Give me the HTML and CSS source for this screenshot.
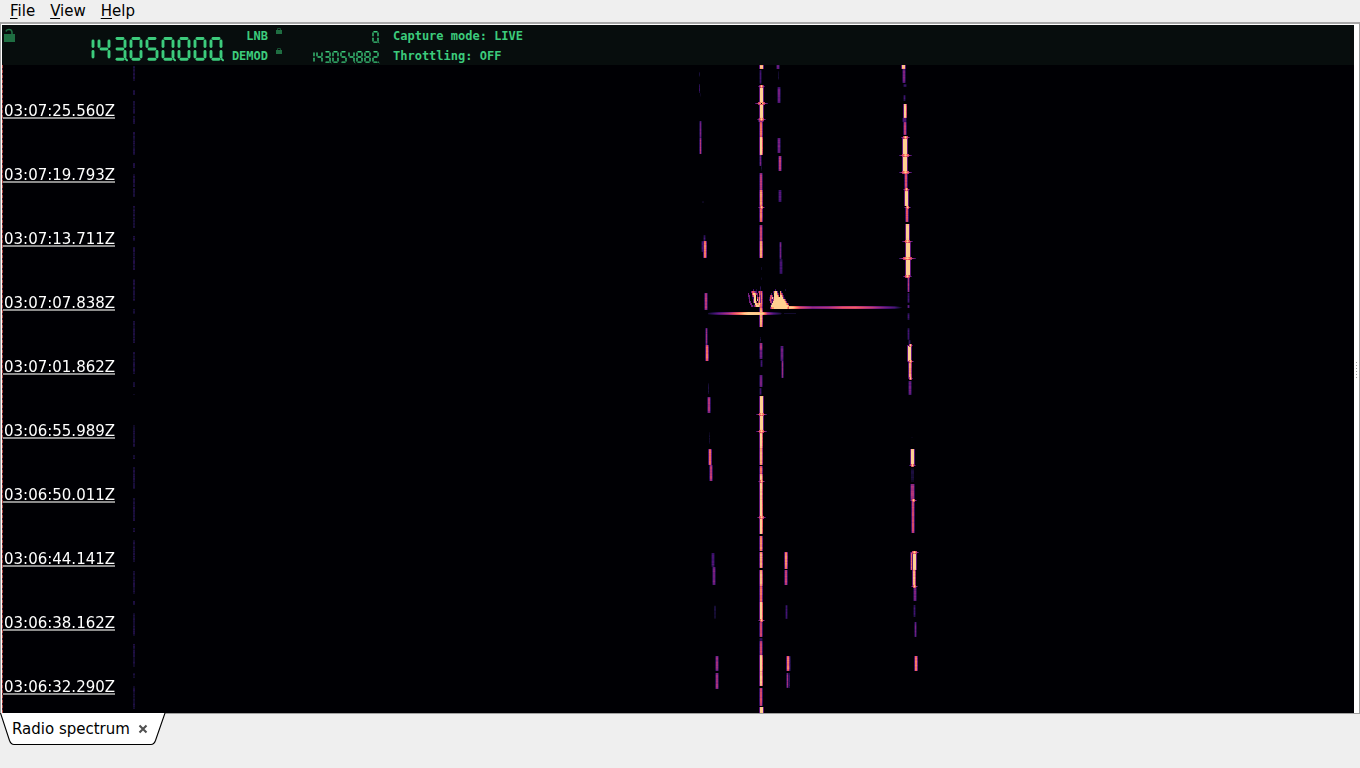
FILE: index.html
```html
<!DOCTYPE html>
<html lang="en">
<head>
  <meta charset="UTF-8">
  <title>Radio spectrum</title>
  <link rel="stylesheet" href="styles.css">
</head>
<body>

  <nav class="menubar">
    <span class="menu"><u>F</u>ile</span>
    <span class="menu"><u>V</u>iew</span>
    <span class="menu"><u>H</u>elp</span>
  </nav>

  <main class="panel">
    <div class="display">
      <header class="status">
        <svg class="lock-big" width="14" height="15" viewBox="0 0 14 15">
          <path d="M3 3.5Q3.5 1.5 6 1.5Q9 1.5 9 4.5V6" fill="none" stroke="#1f6e42" stroke-width="1.6"/>
          <rect x="1" y="6" width="11" height="8" fill="#1f6e42"/>
        </svg>
        <div class="lcd lcd-big" data-value="143.050.000." role="img" aria-label="143.050.000"></div>
        <div class="names">
          <span>LNB</span>
          <span>DEMOD</span>
        </div>
        <div class="locks">
          <svg width="8" height="8" viewBox="0 0 8 8"><path d="M2.5 3V1.5H5.5V3" fill="none" stroke="#174f31"/><rect x="1" y="3" width="6" height="4" fill="#1f6e42"/></svg>
          <svg width="8" height="8" viewBox="0 0 8 8"><path d="M2.5 3V1.5H5.5V3" fill="none" stroke="#174f31"/><rect x="1" y="3" width="6" height="4" fill="#1f6e42"/></svg>
        </div>
        <div class="readouts">
          <div class="lcd lcd-small" data-value="0." role="img" aria-label="0"></div>
          <div class="lcd lcd-small" data-value="143.054.882." role="img" aria-label="143.054.882"></div>
        </div>
        <div class="modes">
          <span>Capture mode: LIVE</span>
          <span>Throttling: OFF</span>
        </div>
      </header>

      <div class="waterfall">
        <canvas id="waterfall" width="1352" height="648"></canvas>
        <div class="times">
          <span>03:07:25.560Z</span>
          <span>03:07:19.793Z</span>
          <span>03:07:13.711Z</span>
          <span>03:07:07.838Z</span>
          <span>03:07:01.862Z</span>
          <span>03:06:55.989Z</span>
          <span>03:06:50.011Z</span>
          <span>03:06:44.141Z</span>
          <span>03:06:38.162Z</span>
          <span>03:06:32.290Z</span>
        </div>
      </div>
    </div>
    <div class="grip"><i></i><i></i><i></i><i></i><i></i><i></i></div>
  </main>

  <footer class="tabs">
    <div class="tab">
      <svg class="tab-shape" width="166" height="33" viewBox="0 0 166 33">
        <path d="M0.5 0L9.5 27.5Q11 31.5 14 31.5H151Q154 31.5 155.5 27.5L165 0" fill="#fff" stroke="#000" stroke-width="1.1"/>
      </svg>
      <span>Radio spectrum</span>
      <svg class="close" width="10" height="10" viewBox="0 0 10 10">
        <path d="M1.5 1.5L8.5 8.5M8.5 1.5L1.5 8.5" stroke="#505050" stroke-width="2.1"/>
      </svg>
    </div>
  </footer>

  <script src="spectrum.js"></script>
</body>
</html>
```
FILE: styles.css
```css
* {
  margin: 0;
  padding: 0;
  box-sizing: border-box;
}

body {
  width: 1360px;
  height: 768px;
  display: flex;
  flex-direction: column;
  overflow: hidden;
  background: #efefef;
  color: #000;
  font: 15px "DejaVu Sans", sans-serif;
}

.menubar {
  height: 22px;
  display: flex;
  gap: 15px;
  padding-left: 10px;
  line-height: 23px;
}

.menu u {
  text-underline-offset: 2px;
  text-decoration-thickness: 1px;
}

.panel {
  height: 692px;
  display: flex;
  background: #fff;
  border: 1px solid #a0a0a0;
  border-top: 2px solid #a8a8a8;
  padding: 1px 0 0 1px;
}

.display {
  width: 1352px;
  display: flex;
  flex-direction: column;
}

.status {
  height: 40px;
  display: flex;
  background: #070d0d;
  color: #3ccb7c;
  font: bold 12px "DejaVu Sans Mono", monospace;
}

.lock-big {
  margin: 3px 0 0 1px;
  width: 14px;
}

.lcd {
  display: flex;
}

.lcd svg {
  overflow: visible;
  fill: none;
  stroke: #3ccb7c;
  stroke-linecap: round;
}

.lcd-big {
  width: 144px;
  height: 24px;
  margin: 12px 0 0 64px;
}

.lcd-big svg {
  width: 16px;
  height: 24px;
  stroke-width: 2.9;
}

.names {
  width: 43px;
  padding-top: 1px;
  display: flex;
  flex-direction: column;
  text-align: right;
}

.names span,
.modes span {
  height: 20px;
  line-height: 20px;
}

.locks {
  width: 16px;
  padding: 2px 0 0 7px;
  display: flex;
  flex-direction: column;
  gap: 12px;
}

.readouts {
  width: 96px;
  padding-top: 6px;
  display: flex;
  flex-direction: column;
  align-items: flex-end;
  gap: 8px;
}

.lcd-small {
  height: 12px;
}

.lcd-small svg {
  width: 8px;
  height: 12px;
  stroke-width: 2.7;
}

.modes {
  margin-left: 13px;
  padding-top: 1px;
  display: flex;
  flex-direction: column;
}

.waterfall {
  position: relative;
  height: 648px;
  background: #000004;
}

.waterfall canvas {
  display: block;
}

.times {
  position: absolute;
  top: 35px;
  left: 1px;
  display: flex;
  flex-direction: column;
  gap: 45px;
  color: #fff;
}

.times span {
  width: 112px;
  height: 19px;
  padding-left: 1px;
  line-height: 22px;
  border-bottom: 2px solid #8c8c8c;
}

.grip {
  flex: 1;
  padding: 337px 0 0 2px;
  display: flex;
  flex-direction: column;
  gap: 2px;
}

.grip i {
  width: 1px;
  height: 1px;
  background: #a0a0a0;
}

.tabs {
  height: 54px;
}

.tab {
  position: relative;
  width: 166px;
  height: 32px;
  margin-top: -1px;
  padding-left: 12px;
  display: flex;
  align-items: center;
  gap: 8px;
}

.tab-shape {
  position: absolute;
  top: 0;
  left: 0;
}

.tab span,
.close {
  position: relative;
}
```
FILE: spectrum.js
```js
// seven segment displays, each cell is 16x24 units
const SEGMENTS = {
  a: [4, 1.5, 10, 1.5],
  b: [12, 4, 12, 9.5],
  c: [12, 14.5, 12, 20],
  d: [4, 22.3, 10, 22.3],
  e: [2, 14.5, 2, 20],
  f: [2, 4, 2, 9.5],
  g: [4, 12, 10, 12]
};
const DIGITS = ["abcdef", "bc", "abdeg", "abcdg", "bcfg", "acdfg", "acdefg", "abc", "abcdefg", "abcdfg"];

document.querySelectorAll(".lcd").forEach(lcd => {
  lcd.innerHTML = lcd.dataset.value.match(/\d\.?/g).map(cell => {
    let lines = [...DIGITS[cell[0]]].map(s => {
      const [x1, y1, x2, y2] = SEGMENTS[s];
      return `<line x1="${x1}" y1="${y1}" x2="${x2}" y2="${y2}"/>`;
    }).join("");
    if (cell[1]) lines += '<line x1="12.7" y1="22" x2="14" y2="23.2" stroke-width="2"/>';
    return `<svg viewBox="0 0 16 24">${lines}</svg>`;
  }).join("");
});

const ctx = document.getElementById("waterfall").getContext("2d");
ctx.translate(-2, -65);

// colour for a signal level between 0 and 7
const PALETTE = [[0, 0, 4], [24, 14, 58], [66, 16, 112], [118, 30, 128], [184, 55, 120], [238, 85, 95], [254, 150, 105], [255, 208, 145]];
function color(level) {
  const l = Math.max(0, Math.min(6.999, level));
  const i = Math.floor(l);
  const c = PALETTE[i].map((v, k) => Math.round(v + (PALETTE[i + 1][k] - v) * (l - i)));
  return `rgb(${c})`;
}

function dot(x, y, w, h, level) {
  ctx.fillStyle = color(level);
  ctx.fillRect(x, y, w, h);
}

let seed = 7;
function noise() {
  seed = (seed * 16807) % 2147483647;
  return seed / 2147483647 - 0.5;
}

// x, first row, last row, core width, level
const TRACES = [
  // carrier
  [760, 65, 69, 3, 7], [760, 70, 84, 1, 2], [760, 85, 118, 3, 7.4], [759, 118, 122, 4, 4], [760, 122, 137, 2, 5.4],
  [760, 137, 155, 2, 7.3], [760, 155, 166, 1, 3], [761, 166, 171, 1, 1], [760, 173, 190, 2, 4], [760, 190, 206, 2, 6],
  [760, 206, 222, 2, 5.4], [760, 225, 241, 2, 4.3], [760, 241, 258, 2, 6.2], [761, 267, 270, 1, 1], [761, 277, 280, 1, 1],
  [760, 286, 291, 1, 1.5], [760, 291, 308, 2, 5.4], [760, 308, 327, 2, 6.4], [760, 337, 343, 1, 1], [760, 343, 350, 2, 4],
  [760, 350, 359, 2, 3], [761, 360, 367, 1, 2], [760, 375, 387, 2, 3], [760, 388, 395, 1, 2], [760, 396, 430, 3, 7.4],
  [760, 432, 448, 2, 7.2], [760, 448, 465, 2, 6.4], [760, 466, 474, 2, 5.4], [760, 474, 500, 2, 6.9], [760, 500, 534, 2, 7.4],
  [760, 536, 551, 2, 5.9], [760, 552, 568, 2, 6.3], [760, 570, 586, 2, 6.5], [760, 586, 602, 2, 5.4], [760, 602, 620, 2, 7.4],
  [760, 622, 637, 2, 4.5], [760, 638, 641, 2, 2], [760, 641, 655, 2, 4.5], [760, 655, 671, 2, 7.2], [760, 671, 686, 2, 6.8],
  [760, 688, 706, 2, 4.5], [760, 707, 713, 3, 7.4],
  // left trace
  [699, 72, 77, 1, 1], [699, 84, 93, 1, 1.7], [700, 93, 97, 1, 0.8], [700, 121, 138, 1, 3], [700, 138, 154, 1, 4],
  [702, 201, 203, 2, 0.8], [704, 235, 241, 1, 2], [702, 241, 252, 1, 2], [704, 241, 258, 2, 5.5], [705, 293, 310, 2, 4],
  [706, 328, 345, 1, 3.6], [706, 345, 361, 2, 5.4], [708, 383, 394, 1, 1], [708, 397, 413, 2, 3.8], [709, 432, 444, 1, 0.7],
  [709, 449, 465, 2, 5.3], [710, 465, 481, 2, 4.1], [712, 553, 567, 2, 2.2], [713, 567, 585, 2, 3], [714, 605, 619, 2, 0.9],
  [716, 656, 671, 2, 3.5], [716, 673, 689, 2, 3.7],
  // mid trace
  [777, 65, 69, 2, 3], [778, 71, 80, 1, 1], [778, 87, 103, 2, 2.8], [778, 138, 153, 2, 3], [779, 156, 171, 2, 4.1],
  [779, 190, 202, 2, 2.4], [780, 242, 259, 1, 3], [780, 259, 274, 2, 2], [781, 346, 361, 2, 2.8], [782, 361, 378, 1, 3.5],
  [783, 451, 453, 1, 0.6], [785, 552, 569, 2, 5.8], [785, 570, 585, 2, 4.3], [786, 605, 619, 1, 2], [789, 656, 671, 1, 2.7],
  [789, 673, 688, 1, 1.5], [787, 656, 671, 2, 5.6], [787, 673, 688, 1, 3.6],
  // right trace
  [902, 65, 69, 3, 7], [903, 69, 83, 2, 3], [904, 84, 87, 2, 2], [904, 95, 101, 1, 2], [904, 104, 118, 2, 7.1],
  [903, 118, 122, 3, 2.5], [904, 122, 135, 2, 4.2], [903, 137, 172, 4, 7.4], [905, 173, 189, 2, 4.5], [905, 190, 206, 3, 7.2],
  [906, 207, 222, 2, 4.8], [906, 224, 240, 3, 7.2], [906, 241, 276, 4, 7.4], [908, 277, 292, 1, 4], [908, 293, 303, 1, 2],
  [908, 305, 308, 1, 3], [908, 313, 320, 1, 2], [908, 328, 340, 1, 2], [909, 340, 345, 1, 2], [908, 345, 362, 3, 7.2],
  [909, 362, 379, 2, 6.1], [909, 381, 395, 2, 2.8], [911, 437, 438, 2, 0.5], [911, 449, 465, 3, 7.4], [911, 468, 482, 3, 1],
  [911, 484, 500, 3, 3.8], [912, 500, 533, 2, 4.4], [911, 552, 570, 2, 5.4], [913, 552, 570, 3, 7.4], [913, 570, 586, 2, 6.5],
  [914, 587, 601, 2, 3], [914, 605, 617, 1, 2], [915, 622, 637, 1, 3], [915, 656, 671, 2, 5.5]
];

TRACES.forEach(([x, y0, y1, w, level]) => {
  for (let y = y0; y < y1; y++) {
    const edge = Math.min((y - y0) / 2, (y1 - 1 - y) / 2, 1) * 0.5 - 0.5;
    const l = level + noise() * 0.5 + edge;
    if (level > 1.8) dot(x - 1, y, w + 2, 1, Math.min(l * 0.4, 2.6));
    dot(x, y, w, 1, l);
    // some rows of the medium signals spread a little to the right
    if (level > 5.2 && w === 2) dot(x + 2, y, 1, 1, l - 2.6);
  }
});

// short bursts crossing the traces: centre, row, half width
const BURSTS = [
  [761, 86, 3], [761, 103, 6], [761, 119, 4], [761, 207, 3], [761, 414, 5], [761, 431, 5], [761, 481, 3], [761, 517, 4], [761, 620, 3],
  [905, 137, 4], [905, 155, 6], [905, 172, 6], [906, 189, 3], [907, 207, 3], [907, 241, 5], [907, 258, 8], [907, 276, 4], [910, 361, 3],
  [910, 378, 2], [910, 345, 2], [912, 465, 3], [913, 500, 3], [914, 552, 4], [914, 586, 3]
];
BURSTS.forEach(([cx, y, r]) => {
  for (let i = -r; i <= r; i++) {
    dot(cx + i, y, 1, 1, 7.4 - 5.6 * Math.abs(i) / r);
    if (Math.abs(i) < r * 0.6) {
      dot(cx + i, y - 1, 1, 1, 6.6 - 5 * Math.abs(i) / r);
      dot(cx + i, y + 1, 1, 1, 5.6 - 4 * Math.abs(i) / r);
    }
  }
});
dot(761, 103, 1, 1, 0);

// horizontal streaks, level given at a few x positions
function streak(y, stops) {
  for (let s = 0; s < stops.length - 1; s++) {
    const [xa, la] = stops[s];
    const [xb, lb] = stops[s + 1];
    for (let x = xa; x < xb; x++) {
      const l = la + (lb - la) * (x - xa) / (xb - xa);
      dot(x, y, 1, 1, l - 0.9);
      dot(x, y + 1, 1, 1, l);
      dot(x, y + 2, 1, 1, l - 0.7);
    }
  }
}
streak(306, [[788, 7.6], [793, 6.8], [800, 4.8], [812, 3.6], [828, 4], [842, 5], [855, 5.2], [872, 4.2], [885, 3], [894, 2.2], [900, 0.8], [902, 0]]);
streak(312, [[708, 1], [718, 2.8], [728, 4], [738, 5.8], [748, 7.8], [762, 7.4], [767, 4], [773, 2.4], [780, 1.2], [782, 0]]);
dot(784, 313, 12, 1, 0.8);

// meteor echo heads, one character per 1x2 px
function echo(x0, y0, rows) {
  rows.forEach((row, j) => {
    [...row].forEach((ch, i) => {
      if (ch !== ".") dot(x0 + i, y0 + j * 2, 1, 2, +ch);
    });
  });
}
echo(747, 289, [
  "......2..1.....",
  "....355432.354.",
  ".3...577643.54.",
  ".33..3577.3.43.",
  ".13..1277.5363.",
  "..3...377.7363.",
  "..33..3774.463.",
  "...33..177667..",
  "....331357776.."
]);
echo(769, 289, [
  "......2.........1....",
  "....26773..62........",
  "..2.177752.653.......",
  ".453.77775.7752......",
  "1547377777777731.....",
  "25324777777777763....",
  ".44277777777777763...",
  "..377777777777777652.",
  ".1777777777777777776.",
  ".3566777777777777765."
]);

// faint spur near the left side
for (let y = 66; y < 713; y++) {
  const on = Math.sin(y * 0.43) + Math.sin(y * 0.171 + 2) > -0.4;
  if (on && (y < 395 || y > 420)) dot(133, y, 2, 1, 0.9 + noise() * 0.7);
}

// dashed marker on the first column
for (let y = 65; y < 713; y++) {
  ctx.fillStyle = y % 5 < 3 ? "#b34a45" : "#4a1b28";
  ctx.fillRect(2, y, 1, 1);
}
```
